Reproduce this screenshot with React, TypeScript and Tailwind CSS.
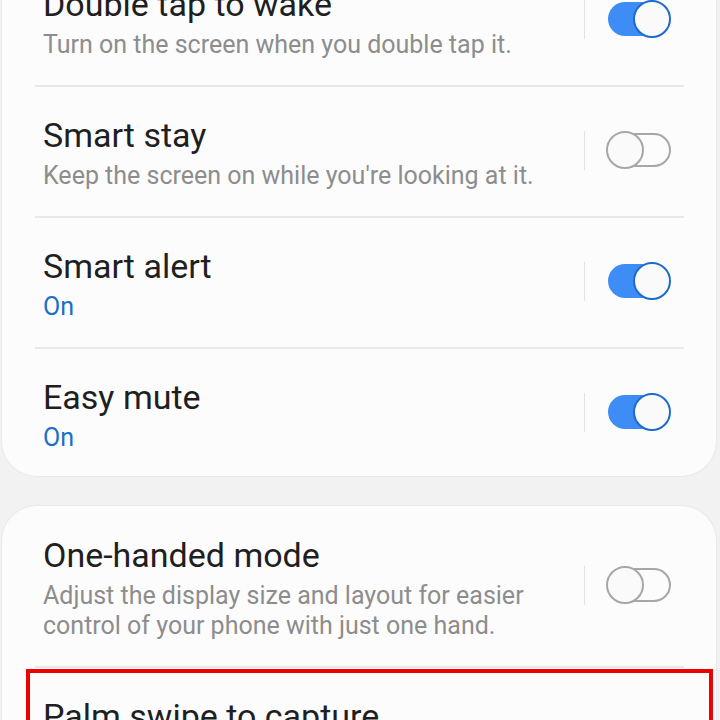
import React from 'react';

interface SettingRow {
    title: string;
    sub: string;
    subBlue?: boolean;
    on: boolean;
}

const topRows: SettingRow[] = [
    { title: 'Double tap to wake', sub: 'Turn on the screen when you double tap it.', on: true },
    { title: 'Smart stay', sub: "Keep the screen on while you're looking at it.", on: false },
    { title: 'Smart alert', sub: 'On', subBlue: true, on: true },
    { title: 'Easy mute', sub: 'On', subBlue: true, on: true },
];

const Toggle: React.FC<{ on: boolean }> = ({ on }) => {
    if (on) {
        return (
            <div className="relative w-[65px] h-[38px]">
                <div className="absolute left-[2px] right-[12px] top-[2px] bottom-[2px] rounded-full bg-[#3e8cf6]" />
                <div className="absolute right-0 top-0 w-[38px] h-[38px] rounded-full border-2 border-[#1d6bcf] bg-[#fafafa]" />
            </div>
        );
    }
    return (
        <div className="relative w-[65px] h-[38px]">
            <div className="absolute left-[4px] right-0 top-[2px] bottom-[2px] rounded-full border-2 border-[#a7a7a7]" />
            <div className="absolute left-0 top-0 w-[38px] h-[38px] rounded-full border-2 border-[#a7a7a7] bg-[#fafafa]" />
        </div>
    );
};

const Row: React.FC<{ row: SettingRow; last?: boolean; first?: boolean }> = ({ row, last, first }) => (
    <div className={`flex items-center pl-[41px] pr-[45px] ${first ? 'pt-[29px]' : 'pt-[28px]'} ${last ? 'pb-[23px]' : 'pb-[25px]'}`}>
        <div className="flex-1 min-w-0">
            <div className="text-[34px] leading-[40px] text-[#1f1f1f]">{row.title}</div>
            <div className={`mt-[6px] text-[25px] leading-[30px] ${row.subBlue ? 'text-[#1b6fc6]' : 'text-[#8d8d8d]'}`}>
                {row.sub}
            </div>
        </div>
        <div className="flex items-center mb-[6px]">
            <div className="w-px h-[39px] bg-[#e2e2e2] mr-[21px]" />
            <Toggle on={row.on} />
        </div>
    </div>
);

const Divider = () => <div className="h-[2px] bg-[#e8e8e8] ml-[33px] mr-[32px]" />;

export default function App() {
    return (
        <div className="w-[720px] h-[720px] overflow-hidden bg-[#f2f2f2]" style={{ fontFamily: 'Roboto, "Noto Sans", sans-serif' }}>
            <div className="pl-[1px] pr-[3px]">
                <div className="mt-[-44px] bg-[#fcfcfc] rounded-[36px] border border-[#e9e9e9] border-t-0">
                    {topRows.map((r, i) => (
                        <div key={r.title}>
                            {i > 0 && <Divider />}
                            <Row row={r} last={i === topRows.length - 1} />
                        </div>
                    ))}
                </div>

                <div className="relative mt-[28px] bg-[#fcfcfc] rounded-t-[36px] border border-[#e9e9e9] border-b-0">
                    <Row
                        first
                        row={{
                            title: 'One-handed mode',
                            sub: 'Adjust the display size and layout for easier control of your phone with just one hand.',
                            on: false,
                        }}
                    />
                    <Divider />
                    <div className="pr-[88px]">
                        <Row row={{ title: 'Palm swipe to capture', sub: 'Capture a screenshot by swiping the edge of your hand across the screen.', on: true }} />
                    </div>
                    <div className="absolute left-[24px] right-[3px] top-[163px] h-[200px] border-4 border-[#ee0000]" />
                </div>
            </div>
        </div>
    );
}
